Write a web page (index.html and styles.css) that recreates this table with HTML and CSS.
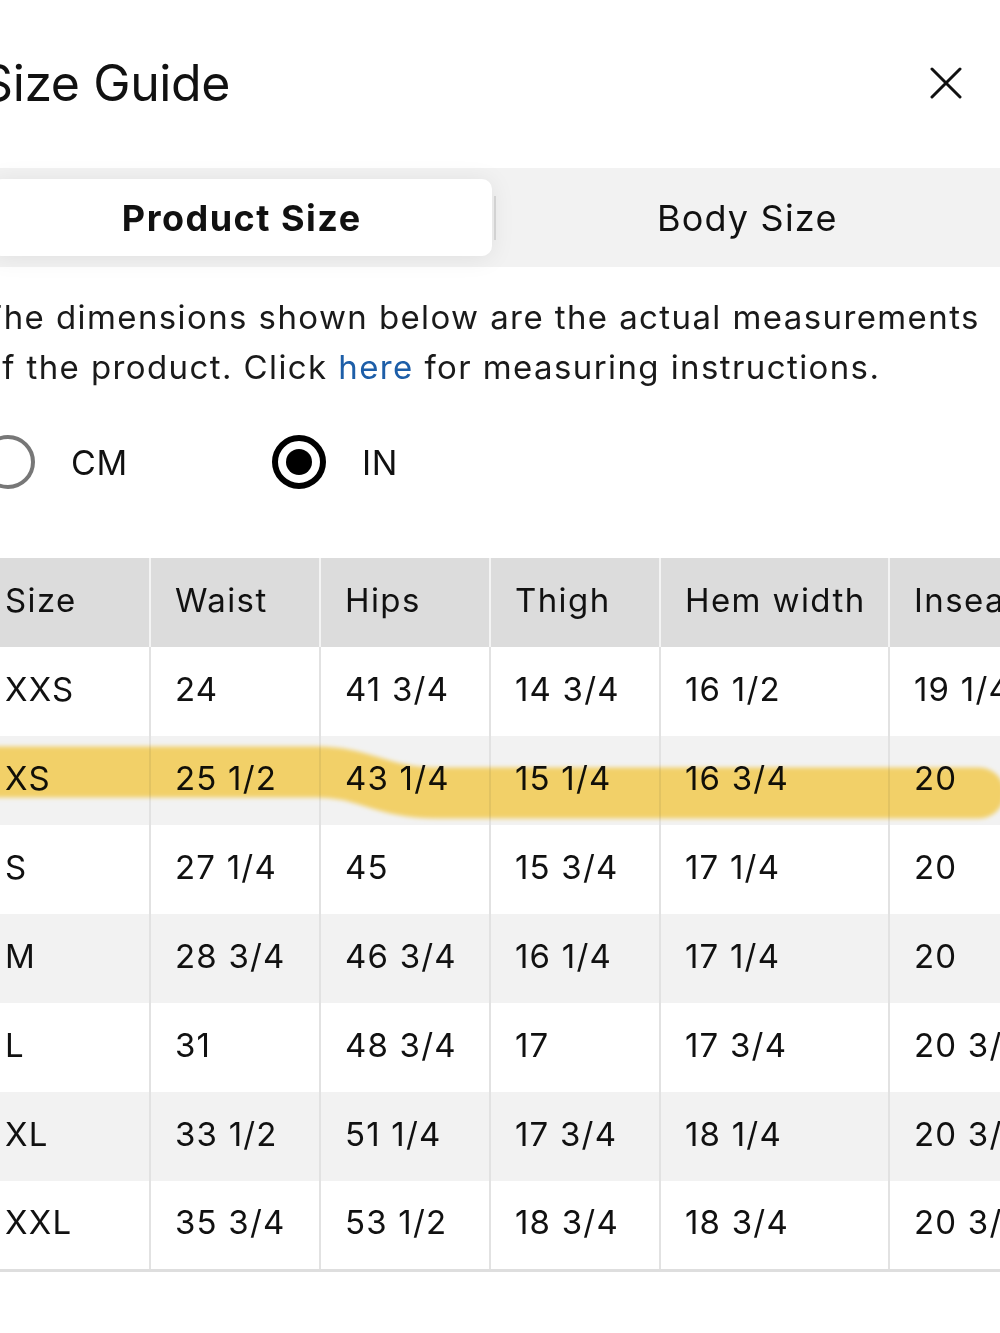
FILE: index.html
```html
<!DOCTYPE html>
<html lang="en">
<head>
    <meta charset="UTF-8">
    <meta name="viewport" content="width=device-width, initial-scale=1.0">
    <title>Size Guide</title>
    <link rel="stylesheet" href="styles.css">
</head>
<body>
    <div class="sheet">
        <!-- Header -->
        <header class="sheet-head">
            <h1>Size Guide</h1>
            <button class="close" aria-label="Close">
                <svg width="32" height="32" viewBox="0 0 32 32">
                    <path d="M2 2 L30 30 M30 2 L2 30" stroke="#111" stroke-width="3" stroke-linecap="round" fill="none"/>
                </svg>
            </button>
        </header>

        <!-- Tabs -->
        <div class="tabs">
            <div class="tab active">Product Size</div>
            <span class="tab-sep"></span>
            <div class="tab">Body Size</div>
        </div>

        <p class="note">The dimensions shown below are the actual measurements of the product. Click <a href="#">here</a> for measuring instructions.</p>

        <!-- Units -->
        <div class="units">
            <label class="unit">
                <span class="radio"></span>
                CM
            </label>
            <label class="unit">
                <span class="radio checked"></span>
                IN
            </label>
        </div>

        <!-- Table -->
        <div class="table-wrap">
            <table class="sizes">
                <colgroup>
                    <col class="c-size">
                    <col class="c-num">
                    <col class="c-num">
                    <col class="c-num">
                    <col class="c-wide">
                    <col class="c-last">
                </colgroup>
                <thead>
                    <tr><th>Size</th><th>Waist</th><th>Hips</th><th>Thigh</th><th>Hem width</th><th>Inseam</th></tr>
                </thead>
                <tbody>
                    <tr><td>XXS</td><td>24</td><td>41 3/4</td><td>14 3/4</td><td>16 1/2</td><td>19 1/4</td></tr>
                    <tr><td>XS</td><td>25 1/2</td><td>43 1/4</td><td>15 1/4</td><td>16 3/4</td><td>20</td></tr>
                    <tr><td>S</td><td>27 1/4</td><td>45</td><td>15 3/4</td><td>17 1/4</td><td>20</td></tr>
                    <tr><td>M</td><td>28 3/4</td><td>46 3/4</td><td>16 1/4</td><td>17 1/4</td><td>20</td></tr>
                    <tr><td>L</td><td>31</td><td>48 3/4</td><td>17</td><td>17 3/4</td><td>20 3/4</td></tr>
                    <tr><td>XL</td><td>33 1/2</td><td>51 1/4</td><td>17 3/4</td><td>18 1/4</td><td>20 3/4</td></tr>
                    <tr><td>XXL</td><td>35 3/4</td><td>53 1/2</td><td>18 3/4</td><td>18 3/4</td><td>20 3/4</td></tr>
                </tbody>
            </table>

            <!-- highlighter mark over the XS row -->
            <svg class="marker" width="1040" height="320" viewBox="0 0 1040 320">
                <defs>
                    <filter id="soft" filterUnits="userSpaceOnUse" x="-50" y="100" width="1140" height="220">
                        <feGaussianBlur stdDeviation="2.2"/>
                    </filter>
                </defs>
                <path d="M-20 214 L335 214 C385 214 400 235 455 235 L998 235" stroke="#ffdc6e" stroke-width="51" stroke-linecap="round" fill="none" filter="url(#soft)"/>
            </svg>
        </div>
    </div>
</body>
</html>
```

FILE: styles.css
```css
* {
    margin: 0;
    padding: 0;
    box-sizing: border-box;
}

body {
    font-family: Inter, 'Noto Sans', sans-serif;
    background: #fff;
    color: #111;
    overflow: hidden;
}

.sheet {
    margin-left: -19px;
    width: 1040px;
}

.sheet-head {
    height: 168px;
    display: flex;
    align-items: center;
    justify-content: space-between;
    padding-right: 59px;
}

.sheet-head h1 {
    font-size: 50px;
    font-weight: 400;
    letter-spacing: -0.4px;
    margin-top: -2px;
}

.close {
    background: none;
    border: none;
    display: flex;
    margin-top: -2px;
}

.tabs {
    display: flex;
    align-items: center;
    background: #f2f2f2;
    padding: 11px;
    width: 1027px;
}

.tab {
    flex: 1;
    height: 77px;
    display: flex;
    align-items: center;
    justify-content: center;
    font-size: 36px;
    letter-spacing: 1.2px;
}

.tab.active {
    background: #fff;
    border-radius: 10px;
    font-weight: 700;
    letter-spacing: 1.5px;
    box-shadow: 0 2px 24px rgba(0, 0, 0, 0.08);
}

.tab-sep {
    width: 2px;
    height: 44px;
    background: #d2d2d2;
    margin: 0 2px;
}

.note {
    font-size: 33px;
    line-height: 50px;
    color: #1a1a1a;
    margin-top: 25px;
    width: 1006px;
    letter-spacing: 1.4px;
}

.note a {
    color: #1d5ea8;
    text-decoration: none;
}

.units {
    display: flex;
    margin-top: 43px;
    height: 54px;
}

.unit {
    display: flex;
    align-items: center;
    gap: 36px;
    width: 291px;
    font-size: 34px;
    letter-spacing: 0.6px;
}

.radio {
    width: 54px;
    height: 54px;
    border-radius: 50%;
    border: 4px solid #777;
    display: flex;
    align-items: center;
    justify-content: center;
}

.radio.checked {
    border: 6px solid #000;
}

.radio.checked::after {
    content: '';
    width: 26px;
    height: 26px;
    border-radius: 50%;
    background: #000;
}

.table-wrap {
    position: relative;
    margin-top: 69px;
}

.sizes {
    border-collapse: collapse;
    table-layout: fixed;
    width: 1108px;
    font-size: 33px;
    letter-spacing: 1.2px;
    border-bottom: 3px solid #dedede;
}

.c-size { width: 169px; }
.c-num { width: 170px; }
.c-wide { width: 229px; }
.c-last { width: 200px; }

.sizes th,
.sizes td {
    height: 89px;
    padding: 0 0 5px 24px;
    text-align: left;
    font-weight: 400;
    white-space: nowrap;
    border-left: 2px solid #e2e2e2;
}

.sizes th:first-child,
.sizes td:first-child {
    border-left: none;
}

.sizes th {
    background: #dcdcdc;
    border-left-color: #f4f4f4;
    letter-spacing: 1.4px;
}

.sizes tbody tr:nth-child(even) td {
    background: #f2f2f2;
}

.marker {
    position: absolute;
    left: 0;
    top: 0;
    mix-blend-mode: multiply;
    pointer-events: none;
}
```
